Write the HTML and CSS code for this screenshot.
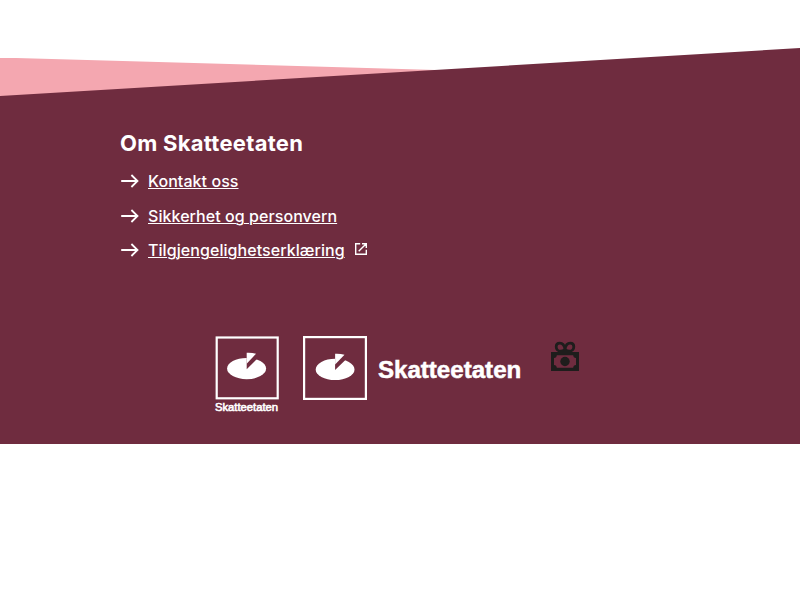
FILE: index.html
```html
<!DOCTYPE html>
<html lang="nb">
<head>
<meta charset="utf-8">
<title>Skatteetaten</title>
<link rel="stylesheet" href="styles.css">
</head>
<body>
<footer class="footer">
  <svg class="slope" viewBox="0 0 800 48" aria-hidden="true">
    <path class="slope-pink" d="M0 10H16L445 22.2V48H0z"/>
    <path class="slope-main" d="M0 48L800 0V48z"/>
  </svg>
  <div class="content">
    <nav class="about">
      <h2 class="heading">Om Skatteetaten</h2>
      <ul class="links">
        <li><svg class="arrow" viewBox="0 0 20 20"><path d="M1.2 10H17.6M11.4 4L17.5 10L11.4 16"/></svg><a href="#">Kontakt oss</a></li>
        <li><svg class="arrow" viewBox="0 0 20 20"><path d="M1.2 10H17.6M11.4 4L17.5 10L11.4 16"/></svg><a href="#">Sikkerhet og personvern</a></li>
        <li><svg class="arrow" viewBox="0 0 20 20"><path d="M1.2 10H17.6M11.4 4L17.5 10L11.4 16"/></svg><a href="#">Tilgjengelighetserklæring</a><svg class="external" viewBox="0 0 14 14"><path d="M6.2 1.7H1.7V12.3H12.3V7.8M8 1.7H12.3V6M12 2L4.7 9.3"/></svg></li>
      </ul>
    </nav>
    <div class="logos">
      <svg class="logo-stacked" viewBox="0 0 66 80" role="img">
        <rect class="frame" x="2.7" y="1.5" width="61" height="60.8"/>
        <ellipse class="mark" cx="32.6" cy="32.6" rx="19.5" ry="10.6"/>
        <path class="cut" d="M32.7 21V33.3L42.9 23L45 21z"/>
        <path class="mark" d="M32.7 16.7Q37.9 16.4 42 17.8L32.7 27.8z"/>
        <text class="wordmark small" x="0.9" y="75.4" font-size="11" textLength="63.2" lengthAdjust="spacingAndGlyphs">Skatteetaten</text>
      </svg>
      <svg class="logo-wide" viewBox="0 0 220 66" role="img">
        <rect class="frame" x="2.1" y="1.1" width="61.8" height="61.8"/>
        <ellipse class="mark" cx="33.1" cy="33.4" rx="19.4" ry="10.6"/>
        <path class="cut" d="M33.1 22V34.1L43.4 24L46 22z"/>
        <path class="mark" d="M33.1 17.7Q38.2 17.4 42.5 18.8L33.1 28.6z"/>
        <text class="wordmark" x="75.9" y="42" font-size="23.8" textLength="143.4" lengthAdjust="spacingAndGlyphs">Skatteetaten</text>
      </svg>
      <svg class="gift" viewBox="0 0 30 32" aria-hidden="true">
        <path class="gift-bow" d="M15 9C14.4 5.4 12.4 3.1 9.8 3.1C7.7 3.1 6.2 4.6 6.2 6.7C6.2 9.1 8 11.2 10.3 11.2C12.8 11.2 14.4 9.8 15 9C15.6 5.4 17.6 3.1 20.2 3.1C22.3 3.1 23.8 4.6 23.8 6.7C23.8 9.1 22 11.2 19.7 11.2C17.2 11.2 15.6 9.8 15 9V12.5"/>
        <path class="gift-box" fill-rule="evenodd" d="M1 12H29V31H1zM6.8 15.2C6.8 16.8 5.7 17.8 4 18V25C5.7 25.2 6.8 26.2 6.8 27.8H23.2C23.2 26.2 24.3 25.2 26 25V18C24.3 17.8 23.2 16.8 23.2 15.2z"/>
        <circle class="gift-box" cx="15" cy="21.5" r="4.7"/>
      </svg>
    </div>
  </div>
</footer>
</body>
</html>
```

FILE: styles.css
```css
body {
  margin: 0;
  padding-top: 48px;
  background: #fff;
  font-family: Inter, "Liberation Sans", sans-serif;
}

.footer {
  color: #fff;
}

.slope {
  display: block;
  width: 100%;
  height: 48px;
}

.slope-pink {
  fill: #f4a7b0;
}

.slope-main {
  fill: #6f2c3f;
}

.content {
  box-sizing: border-box;
  height: 348px;
  padding: 32px 120px 0;
  background: #6f2c3f;
}

.heading {
  margin: 0;
  font-size: 22px;
  line-height: 30px;
  font-weight: 700;
  letter-spacing: 0.27px;
}

.links {
  display: grid;
  gap: 10.5px;
  margin: 11px 0 0;
  padding: 0;
  list-style: none;
  font-size: 16px;
  line-height: 24px;
}

.links li {
  display: flex;
  align-items: center;
  height: 24px;
}

.links a {
  color: inherit;
  font-weight: 500;
  letter-spacing: 0.06px;
  text-underline-offset: 1px;
  text-decoration-thickness: 1px;
}

.arrow {
  width: 20px;
  height: 20px;
  margin-right: 8px;
}

.arrow path {
  fill: none;
  stroke: #fff;
  stroke-width: 1.8;
}

.external {
  width: 14px;
  height: 14px;
  margin: -3px 0 0 9px;
}

.external path {
  fill: none;
  stroke: #fff;
  stroke-width: 1.4;
}

.logos {
  display: flex;
  align-items: flex-start;
  margin: 74px 0 0 94px;
}

.logo-stacked {
  width: 66px;
  height: 80px;
}

.logo-wide {
  width: 220px;
  height: 66px;
  margin-left: 22px;
}

.frame {
  fill: none;
  stroke: #fff;
  stroke-width: 2.2;
}

.mark,
.wordmark {
  fill: #fff;
}

.cut {
  fill: #6f2c3f;
}

.wordmark {
  font-family: "Liberation Sans", Arial, sans-serif;
  font-weight: 700;
  stroke: #fff;
  stroke-width: 0.5;
}

.small {
  font-weight: 400;
  stroke-width: 0.6;
}

.gift {
  width: 30px;
  height: 32px;
  margin: 4px 0 0 28px;
}

.gift-bow {
  fill: none;
  stroke: #1e1d1c;
  stroke-width: 2.8;
}

.gift-box {
  fill: #1e1d1c;
}
```
